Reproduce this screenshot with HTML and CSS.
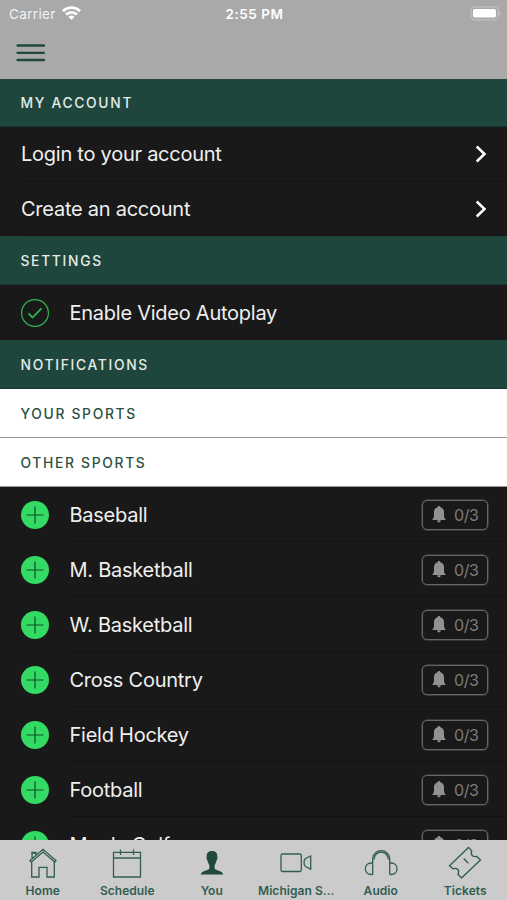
FILE: index.html
```html
<!DOCTYPE html>
<html lang="en">
<head>
<meta charset="utf-8">
<title>My Account</title>
<link rel="stylesheet" href="styles.css">
</head>
<body>
<svg class="defs" aria-hidden="true">
  <symbol id="plus" viewBox="0 0 28 28"><circle cx="14" cy="14" r="14" fill="#33da63"/><path d="M14 5.5v17M5.5 14h17" stroke="#124f2a" stroke-width="1.2"/></symbol>
  <symbol id="bell" viewBox="0 0 14 17"><path d="M7 0C6.2 0 5.700 .5 5.600 1.200C3.300 1.900 2 3.700 2 6V9.500C2 11.400 1.400 12.500 0 14H14C12.600 12.500 12 11.400 12 9.500V6C12 3.700 10.700 1.900 8.400 1.200C8.300 .5 7.800 0 7 0ZM5.200 14.300C5.300 17 8.700 17 8.800 14.300Z" fill="#929292"/></symbol>
  <symbol id="chevron" viewBox="0 0 12 18"><path d="M1.700 1.500L9.500 9L1.700 16.500" fill="none" stroke="#fff" stroke-width="2.500"/></symbol>
</svg>
<div class="app">
  <header class="top">
    <div class="status">
      <div class="carrier"><span>Carrier</span>
        <svg width="19" height="15" viewBox="0 0 19 15" fill="none" stroke="#fff" stroke-width="2.800"><path d="M1 5.200C5.800 .3 13.200 .3 18 5.200M4.100 8.600C7.200 5.500 11.800 5.500 14.900 8.600"/><path d="M6.400 10.800C8.200 9 10.800 9 12.600 10.800L9.500 14Z" fill="#fff" stroke="none"/></svg>
      </div>
      <div class="time">2:55 PM</div>
      <svg class="battery" width="32" height="15" viewBox="0 0 32 15"><rect x=".8" y=".8" width="27.400" height="13" rx="4" fill="none" stroke="#c0c0c0" stroke-width="1.300"/><rect x="3" y="3" width="23" height="8.600" rx="2" fill="#fff"/><path d="M29.500 5C31.500 6 31.500 8.500 29.500 9.500Z" fill="#c0c0c0"/></svg>
    </div>
    <svg class="menu" width="29" height="18" viewBox="0 0 29 18"><path d="M1.500 1.500H28M1.500 8.800H28M1.500 16H28" stroke="#21483d" stroke-width="2.300" stroke-linecap="round"/></svg>
  </header>
  <main class="list">
    <h2 class="section first"><span>MY ACCOUNT</span></h2>
    <div class="row link"><span class="label">Login to your account</span><svg width="12" height="18"><use href="#chevron"/></svg></div>
    <div class="row link last"><span class="label">Create an account</span><svg width="12" height="18"><use href="#chevron"/></svg></div>
    <h2 class="section"><span>SETTINGS</span></h2>
    <div class="row setting"><svg class="mark" width="28" height="28" viewBox="0 0 28 28" fill="none" stroke="#2fb954"><circle cx="14" cy="14" r="13.400" stroke-width="1.200"/><path d="M7.500 14.400L11.500 18.500L20.500 9.300" stroke-width="1.700"/></svg><span class="label">Enable Video Autoplay</span></div>
    <h2 class="section"><span>NOTIFICATIONS</span></h2>
    <h2 class="section light"><span>YOUR SPORTS</span></h2>
    <h2 class="section light"><span>OTHER SPORTS</span></h2>
    <div class="row sport"><svg class="mark" width="28" height="28"><use href="#plus"/></svg><span class="label">Baseball</span><span class="alerts"><svg width="14" height="17"><use href="#bell"/></svg>0/3</span></div>
    <div class="row sport"><svg class="mark" width="28" height="28"><use href="#plus"/></svg><span class="label">M. Basketball</span><span class="alerts"><svg width="14" height="17"><use href="#bell"/></svg>0/3</span></div>
    <div class="row sport"><svg class="mark" width="28" height="28"><use href="#plus"/></svg><span class="label">W. Basketball</span><span class="alerts"><svg width="14" height="17"><use href="#bell"/></svg>0/3</span></div>
    <div class="row sport"><svg class="mark" width="28" height="28"><use href="#plus"/></svg><span class="label">Cross Country</span><span class="alerts"><svg width="14" height="17"><use href="#bell"/></svg>0/3</span></div>
    <div class="row sport"><svg class="mark" width="28" height="28"><use href="#plus"/></svg><span class="label">Field Hockey</span><span class="alerts"><svg width="14" height="17"><use href="#bell"/></svg>0/3</span></div>
    <div class="row sport"><svg class="mark" width="28" height="28"><use href="#plus"/></svg><span class="label">Football</span><span class="alerts"><svg width="14" height="17"><use href="#bell"/></svg>0/3</span></div>
    <div class="row sport"><svg class="mark" width="28" height="28"><use href="#plus"/></svg><span class="label">Men's Golf</span><span class="alerts"><svg width="14" height="17"><use href="#bell"/></svg>0/3</span></div>
  </main>
  <nav class="tabs">
    <div class="tab"><svg viewBox="0 0 36 36"><path d="M5 16.500L18 5.300L31 16.500L29.800 18L18 8L6.200 18ZM7 15V9H11V11.300M6.200 8.300H11.700M6.700 17.700V33H14V23.300H22V33H29.300V17.700"/></svg><span>Home</span></div>
    <div class="tab"><svg viewBox="0 0 36 36"><path d="M4.500 8.300H31.500V33H4.500ZM4.500 14H31.500M11.500 5.500V11M24.500 5.500V11"/></svg><span>Schedule</span></div>
    <div class="tab active"><svg viewBox="0 0 36 36"><path d="M18 7C13.800 7 12.500 9.500 12.700 13C12.200 13.500 12.700 16 13.600 16.700C14 19 14.900 20 15.400 21.500V24.500C14.500 26.600 8 26.300 6.700 30.500H29.300C28 26.300 21.500 26.600 20.600 24.500V21.500C21.100 20 22 19 22.400 16.700C23.300 16 23.800 13.500 23.300 13C23.500 9.500 22.200 7 18 7Z"/></svg><span>You</span></div>
    <div class="tab"><svg viewBox="0 0 36 36"><rect x="3" y="10" width="20.300" height="17.500" rx="1.500"/><path d="M32.700 12V25.200L27.500 22.500C25.500 20.500 25.500 16.500 27.500 14.500Z"/></svg><span>Michigan S...</span></div>
    <div class="tab"><svg viewBox="0 0 36 36"><path d="M9.700 30.500V15.500C9.700 3.700 26.700 3.700 26.700 15.500V30.500M11.200 15.500C11.200 5.700 25.200 5.700 25.200 15.500M9.700 19H8.500C.3 19 .3 30.500 8.500 30.500H9.700M26.700 19H27.900C36.100 19 36.100 30.500 27.900 30.500H26.700"/></svg><span>Audio</span></div>
    <div class="tab"><svg viewBox="0 0 36 36"><path d="M21.500 3.500L24.800 6.800C23 11 26 13.200 29.800 12.500L33.500 16L14.500 34L11 30.300C13 26 10 23.500 6 24.800L2.500 21.700Z M16.700 14.500L21.300 19.200"/></svg><span>Tickets</span></div>
  </nav>
</div>
</body>
</html>
```

FILE: styles.css
```css
* { box-sizing: border-box; }
body { margin: 0; background: #191919; font-family: Inter, "Liberation Sans", sans-serif; }
.defs { display: block; width: 0; height: 0; }
.app { height: 900px; display: flex; flex-direction: column; overflow: hidden; }
.top { flex: none; height: 79px; background: #a9a9a9; }
.status { height: 27px; padding: 0 7px 0 9px; display: grid; grid-template-columns: 1fr auto 1fr; align-items: center; color: #fff; font-size: 13.5px; }
.carrier { display: flex; align-items: center; gap: 6px; letter-spacing: .35px; color: #f2f2f2; }
.time { font-weight: 600; letter-spacing: .5px; }
.battery { justify-self: end; margin-right: -2px; }
.menu { display: block; margin: 17px 0 0 16px; }
.list { flex: 1; min-height: 0; overflow: hidden; }
.section { margin: 0; height: 49px; padding: 1px 21px 0 20.5px; display: flex; align-items: center; background: #1f463c; color: #e3ece9; font-size: 13.8px; font-weight: 500; letter-spacing: 1.7px; border-bottom: 1px solid #17342d; }
.section.first { height: 48px; }
.section.light { background: #fff; color: #2b5145; border-color: #999; }
.row { height: 55px; display: flex; align-items: center; color: #efefef; font-size: 20px; background: #191919; }
.link { margin-left: 21px; padding-right: 20px; justify-content: space-between; border-bottom: 1px solid #121212; }
.link.last { height: 54px; }
.setting { padding-left: 21px; }
.mark { flex: none; margin-right: 20.5px; }
.label { letter-spacing: -.25px; white-space: nowrap; }
.sport { padding: 0 19px 0 21px; background: linear-gradient(#121212, #121212) 70px 100% / 100% 1px no-repeat #191919; }
.sport .label { flex: 1; }
.alerts { width: 66px; height: 30px; border: 1.5px solid #666; border-radius: 5px; display: flex; align-items: center; padding-left: 9px; gap: 8px; color: #7c7c7c; font-size: 16px; letter-spacing: -.4px; box-shadow: 0 0 0 .5px #555; }
.alerts svg { flex: none; }
.tabs { flex: none; height: 60px; background: #cbcbcb; display: grid; grid-template-columns: repeat(6, 1fr); }
.tab { min-width: 0; display: flex; flex-direction: column; align-items: center; padding: 4px 0 0 1px; color: #315d50; font-size: 12px; font-weight: 600; line-height: 16px; letter-spacing: .05px; white-space: nowrap; }
.tab svg { width: 36px; height: 36px; margin-bottom: 3px; fill: none; stroke: #315d50; stroke-width: 1.3; }
.tab.active svg { fill: #1f4a3d; stroke: none; }
```
